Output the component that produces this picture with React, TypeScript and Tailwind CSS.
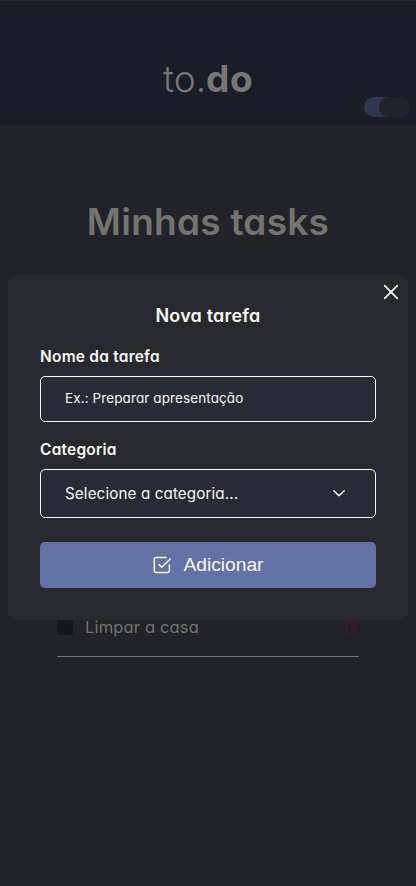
import React from "react";

function Header() {
  return (
    <header className="flex h-[125px] flex-col border-t border-[#272729] bg-[#1a1c28]">
      <h1 className="mt-[51px] ml-[163px] h-[45px] text-[37px] leading-[54px] whitespace-nowrap text-[#777777]">
        <span className="font-[350]">to.</span>
        <span className="font-bold tracking-[0.6px]">do</span>
      </h1>
      <div className="mr-[7px] flex h-5 w-[45px] justify-end self-end rounded-full bg-[#31364f]">
        <span className="h-5 w-[30px] rounded-full bg-[#22222b]" />
      </div>
    </header>
  );
}

function TaskRow() {
  return (
    <div className="mx-[57px] flex h-[59px] items-center border-b border-[#74746f]">
      <span className="h-4 w-4 rounded-[2px] bg-[#15161a]" />
      <span className="ml-3 flex-1 text-[16.5px] tracking-[0.16px] text-[#74746f]">Limpar a casa</span>
      <svg className="h-4 w-4" viewBox="0 0 16 16" fill="none" stroke="#5c111f" strokeWidth="1.2">
        <path d="M3.5 2.5V13.5H12.5V2.5M2 2.5H14M5.5 2.5V0.5H10.5V2.5" />
      </svg>
    </div>
  );
}

function Modal() {
  return (
    <section className="absolute top-[275px] left-2 h-[345px] w-[400px] rounded-[9px] bg-[#282830] px-8 text-[#f8f8f2]">
      <svg className="absolute top-[9px] right-[9px] h-4 w-4" viewBox="0 0 16 16" fill="none" stroke="currentColor" strokeWidth="1.7" strokeLinecap="round">
        <path d="M1.7 1.7L14.3 14.3M14.3 1.7L1.7 14.3" />
      </svg>
      <h3 className="mt-[27px] h-[27px] text-center text-[18px] leading-[27px] font-semibold tracking-[0.2px]">Nova tarefa</h3>
      <div className="mt-[16px] h-6 text-[15.5px] leading-6 font-semibold tracking-[0.22px]">Nome da tarefa</div>
      <div className="mt-[7px] flex h-[46px] items-center rounded-[5px] border border-[#f8f8f2] bg-[#282a36] pl-6 text-[13.5px] tracking-[0.1px]">
        <span className="-mt-0.5">Ex.: Preparar apresentação</span>
      </div>
      <div className="mt-4 h-6 text-[15.5px] leading-6 font-semibold tracking-[0.22px]">Categoria</div>
      <div className="mt-[7px] flex h-[49px] items-center justify-between rounded-[5px] border border-[#f8f8f2] bg-[#282a36] pr-[29px] pl-6 text-[15.2px] tracking-[0.12px]">
        <span className="mt-px">Selecione a categoria...</span>
        <svg className="mt-[-2px] h-[14px] w-[14px]" viewBox="0 0 14 14" fill="none" stroke="currentColor" strokeWidth="1.5" strokeLinecap="round" strokeLinejoin="round">
          <path d="M1.8 4.7L7 9.7L12.2 4.7" />
        </svg>
      </div>
      <button className="mt-6 flex h-[46px] w-full items-center justify-center rounded-[5px] bg-[#6272a4] font-['Liberation_Sans',sans-serif] text-[19.2px]">
        <svg className="mr-[13px] h-[18px] w-[18px]" viewBox="0 0 18 18" fill="none" stroke="currentColor" strokeWidth="1.5" strokeLinecap="round" strokeLinejoin="round">
          <path d="M13 1.5H3A1.7 1.7 0 0 0 1.3 3.2V14.8A1.7 1.7 0 0 0 3 16.5H14.7A1.7 1.7 0 0 0 16.4 14.8V9M17.2 3L8.8 11.2L6 8.6" />
        </svg>
        Adicionar
      </button>
    </section>
  );
}

export default function App() {
  return (
    <main className="relative h-[886px] w-[416px] overflow-hidden bg-[#22222b] font-['Inter',sans-serif] [font-feature-settings:'cv11']">
      <Header />
      <h2 className="mt-[70px] mb-[349px] h-[54px] text-center text-[37px] leading-[54px] font-semibold tracking-[0.25px] text-[#74746f]">Minhas tasks</h2>
      <TaskRow />
      <Modal />
    </main>
  );
}
